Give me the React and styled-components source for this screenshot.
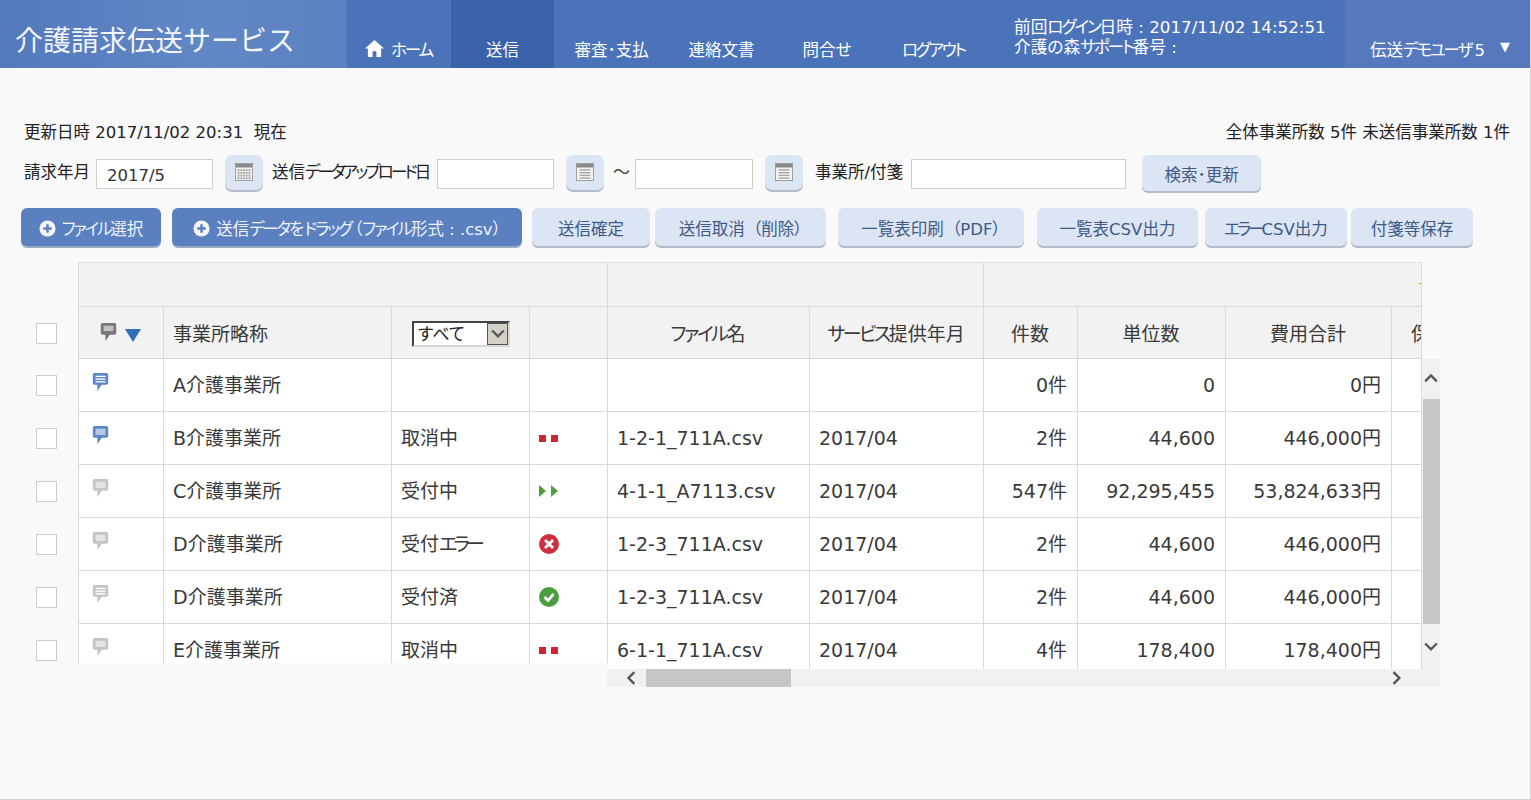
import React from "react";
import styled, { createGlobalStyle } from "styled-components";

const FONT = `"DejaVu Sans", "Noto Sans CJK JP", sans-serif`;

const GlobalStyle = createGlobalStyle`
  html, body {
    margin: 0;
    padding: 0;
    height: 800px;
    overflow: hidden;
    background: #f9f9f9;
  }
  body {
    font-family: ${FONT};
    font-feature-settings: "palt";
    color: #333;
  }
`;

// kana runs are set narrower than the kanji around them
const Kana = styled.span`
  letter-spacing: ${(p) => p.$ls || -0.13}em;
`;

const Page = styled.div`
  height: 799px;
  border-bottom: 1px solid #d4d4d4;
  border-right: 1px solid #d4d4d4;
  box-sizing: content-box;
  width: 1530px;
`;

const Header = styled.header`
  display: flex;
  height: 68px;
  color: #fff;
  background: #4b73b9;
`;

const Title = styled.div`
  width: 347px;
  box-sizing: border-box;
  padding: 23px 0 0 15px;
  font-size: 28px;
  line-height: 38px;
  font-feature-settings: normal;
  background: linear-gradient(90deg, #5379bd 0%, #6287c5 60%, #5c81c1 100%);
  color: #f2f5fb;
`;

const NavItem = styled.a`
  display: flex;
  align-items: flex-end;
  justify-content: center;
  gap: 7px;
  width: ${(p) => p.$w}px;
  box-sizing: border-box;
  padding-bottom: 5px;
  font-size: 16.5px;
  line-height: 24px;
  border-right: 1px solid #4f77bc;
  background: ${(p) => (p.$active ? "#3a62ab" : "#4b73b9")};
`;

const HomeIcon = styled.svg`
  width: 19px;
  height: 19px;
  margin-bottom: 5px;
  fill: #fff;
`;

const LoginInfo = styled.div`
  width: 357px;
  box-sizing: border-box;
  padding: 17px 0 0 26px;
  font-size: 16.7px;
  line-height: 20px;
`;

const UserMenu = styled.div`
  flex: 1;
  display: flex;
  align-items: flex-end;
  justify-content: flex-end;
  gap: 15px;
  padding: 0 20px 5px 0;
  font-size: 16.5px;
  line-height: 24px;
  background: #5679bd;
`;

const UserArrow = styled.span`
  font-size: 13px;
  margin-bottom: 4px;
`;

const Main = styled.main`
  padding: 53px 20px 0 24px;
`;

const StatusLine = styled.div`
  display: flex;
  justify-content: space-between;
  font-size: 16.5px;
  line-height: 24px;
  color: #222;
`;

const FilterRow = styled.div`
  display: flex;
  align-items: flex-start;
  margin-top: 10px;
  height: 38px;
`;

const Label = styled.label`
  font-size: 16.5px;
  line-height: 36px;
  width: ${(p) => p.$w}px;
  white-space: nowrap;
  color: #222;
`;

const TextBox = styled.input`
  box-sizing: border-box;
  width: ${(p) => p.$w}px;
  height: 30px;
  margin-top: 4px;
  padding: 2px 10px 0;
  border: 1px solid #cfcfcf;
  background: #fff;
  font: 16.5px ${FONT};
  color: #333;
  outline: none;
`;

const CalendarButton = styled.button`
  display: flex;
  align-items: center;
  justify-content: center;
  width: 38px;
  height: 35px;
  margin: 0 ${(p) => p.$mr}px 0 12px;
  padding: 0 0 1px;
  border: 0;
  border-radius: 7px;
  background: #dce5f3;
  box-shadow: 0 2px 0 #b4bac6;
`;

const Tilde = styled.span`
  width: 31px;
  margin-left: -9px;
  padding-left: 9px;
  box-sizing: border-box;
  font-size: 17px;
  line-height: 34px;
  color: #444;
`;

const ActionRow = styled.div`
  display: flex;
  margin: 15px 0 0 -3px;
  height: 40px;
`;

const ActionButton = styled.button`
  display: flex;
  align-items: center;
  justify-content: center;
  gap: 6px;
  box-sizing: border-box;
  width: ${(p) => p.$w}px;
  height: ${(p) => p.$h || 38}px;
  margin-left: ${(p) => p.$ml || 0}px;
  padding: 2px 0 0;
  border: 0;
  border-radius: 6px;
  font: 16.5px/24px ${FONT};
  font-feature-settings: "palt";
  white-space: nowrap;
  color: ${(p) => (p.$primary ? "#eef2fa" : "#3f5a86")};
  background: ${(p) => (p.$primary ? "#5a80c0" : "#dce5f3")};
  box-shadow: 0 2px 0 ${(p) => (p.$primary ? "#9aa9c6" : "#b4bac6")};
`;

const ButtonText = styled.span`
  display: block;
  padding-top: 4px;
`;

const Board = styled.section`
  display: flex;
  margin: 14px 0 0 -24px;
`;

const FixedPane = styled.div`
  flex: none;
  width: 608px;
  height: 401px;
  overflow: hidden;
`;

const ScrollPane = styled.div`
  flex: none;
  width: 832px;
`;

const ScrollUpper = styled.div`
  display: flex;
`;

const ScrollBody = styled.div`
  flex: none;
  width: 814px;
  height: 407px;
  overflow: hidden;
`;

const Row = styled.div`
  display: grid;
  grid-template-columns: ${(p) => p.$cols};
  height: ${(p) => p.$h}px;
`;

const Cell = styled.div`
  box-sizing: border-box;
  display: flex;
  align-items: center;
  justify-content: ${(p) => p.$align || "flex-start"};
  padding: ${(p) => (p.$head ? 2 : 0)}px 10px 0 9px;
  font-size: 19px;
  line-height: 26px;
  white-space: nowrap;
  overflow: hidden;
  color: #3a3a3a;
  border-right: 1px solid #d9d9d9;
  border-bottom: 1px solid #d9d9d9;
  background: ${(p) => (p.$head ? "#f2f2f2" : "#fff")};
`;

const GroupCell = styled(Cell)`
  grid-column: ${(p) => p.$span};
  border-top: 1px solid #e2e2e2;
  border-left: ${(p) => (p.$first ? "1px solid #d9d9d9" : "0")};
`;

const CheckCell = styled.div`
  display: flex;
  align-items: center;
  padding-left: 36px;
`;

const Check = styled.span`
  box-sizing: border-box;
  display: block;
  width: 21px;
  height: 21px;
  background: #fff;
  border: 1px solid #cdcdcd;
`;

const IconCell = styled(Cell)`
  align-items: flex-start;
  padding: ${(p) => (p.$head ? "16px 0 0 21px" : "14px 0 0 13px")};
  gap: 8px;
  border-left: 1px solid #d9d9d9;
`;

const FilterSelect = styled.div`
  display: flex;
  align-items: center;
  justify-content: space-between;
  box-sizing: border-box;
  width: 98px;
  height: 26px;
  margin-left: 11px;
  padding-left: 4px;
  font-size: 17px;
  color: #222;
  background: #fff;
  border-top: 2px solid #444;
  border-left: 2px solid #444;
  border-right: 2px solid #d8d8d8;
  border-bottom: 2px solid #d8d8d8;
`;

const SelectArrow = styled.span`
  display: flex;
  align-items: center;
  justify-content: center;
  box-sizing: border-box;
  width: 21px;
  height: 22px;
  background: #d4d0c8;
  border: 1px solid #555;
`;

const HeadText = styled.span`
  width: 100%;
  text-align: center;
`;

const ClippedHead = styled.span`
  padding-left: 10px;
`;

const Marker = styled.span`
  margin-left: auto;
  margin-right: -19px;
  margin-bottom: 4px;
  font-size: 13px;
  color: #e8863a;
`;

const VScroll = styled.div`
  flex: none;
  display: flex;
  flex-direction: column;
  width: 18px;
  height: 311px;
  margin-top: 97px;
  background: #f1f1f1;
`;

const ScrollArrow = styled.div`
  flex: none;
  display: flex;
  align-items: center;
  justify-content: center;
  box-sizing: border-box;
  height: ${(p) => (p.$wide ? "18px" : `${p.$size}px`)};
  width: ${(p) => (p.$wide ? `${p.$size}px` : "auto")};
  padding-left: ${(p) => p.$pad || 0}px;
`;

const VThumb = styled.div`
  flex: none;
  height: 225px;
  margin-left: 1px;
  background: #c6c6c6;
`;

const HScroll = styled.div`
  display: flex;
  height: 18px;
  margin-left: -1px;
  margin-top: -1px;
  background: #f1f1f1;
`;

const HThumb = styled.div`
  width: 145px;
  background: #c6c6c6;
`;

const HSpacer = styled.div`
  flex: 1;
`;

const Chevron = ({ dir }) => {
  const d = {
    up: "M1 8 L6 3 L11 8",
    down: "M1 3 L6 8 L11 3",
    left: "M8 1 L3 6 L8 11",
    right: "M3 1 L8 6 L3 11",
  }[dir];
  return (
    <svg width="14" height="14" viewBox="0 0 12 12" fill="none" stroke="#555" strokeWidth="2">
      <path d={d} />
    </svg>
  );
};

const Calendar = ({ lines }) => (
  <svg width="18" height="18" viewBox="0 0 20 20">
    <rect x="0.5" y="0.5" width="19" height="19" fill="#f2f2f2" stroke="#9a9a9a" />
    <rect x="1" y="1" width="18" height="4" fill="#8a8a8a" />
    {lines
      ? [7, 10, 13, 16].map((y) => <rect key={y} x="4" y={y} width="12" height="1.4" fill="#a0a0a0" />)
      : [7, 10, 13, 16].map((y) =>
          [3, 6, 9, 12, 15].map((x) => <rect key={`${x}-${y}`} x={x} y={y} width="2" height="2" fill="#a0a0a0" />)
        )}
  </svg>
);

const Bubble = ({ color, lines, dark }) => (
  <svg width="17" height="19" viewBox="0 0 17 21">
    <path d="M2 0 H15 Q17 0 17 2 V11 Q17 13 15 13 H10 L5 20 V13 H2 Q0 13 0 11 V2 Q0 0 2 0 Z" fill={color} />
    {lines ? (
      [3, 6, 9].map((y) => <rect key={y} x="3" y={y} width="11" height="1.5" fill="#fff" />)
    ) : (
      <rect x="3" y="3" width="11" height={dark ? 6 : 7} fill="#fff" opacity="0.55" />
    )}
  </svg>
);

const PlusCircle = () => (
  <svg width="17" height="17" viewBox="0 0 18 18">
    <circle cx="9" cy="9" r="8.5" fill="#f4f6fb" />
    <path d="M9 4.5 V13.5 M4.5 9 H13.5" stroke="#5a80c0" strokeWidth="2.6" />
  </svg>
);

const StatusIcon = ({ kind }) => {
  if (kind === "stop")
    return (
      <svg width="21" height="7" viewBox="0 0 21 7">
        <rect width="7" height="7" fill="#cf2433" />
        <rect x="12" width="7" height="7" fill="#cf2433" />
      </svg>
    );
  if (kind === "play")
    return (
      <svg width="20" height="12" viewBox="0 0 20 12">
        <path d="M0 0 L7 6 L0 12 Z M12 0 L19 6 L12 12 Z" fill="#4fa03c" />
      </svg>
    );
  if (kind === "error")
    return (
      <svg width="20" height="20" viewBox="0 0 20 20">
        <circle cx="10" cy="10" r="10" fill="#cf2e3a" />
        <path d="M6 6 L14 14 M14 6 L6 14" stroke="#fff" strokeWidth="3" />
      </svg>
    );
  return (
    <svg width="20" height="20" viewBox="0 0 20 20">
      <circle cx="10" cy="10" r="10" fill="#4b9e3f" />
      <path d="M5.5 10 L9 13.5 L14.5 7" stroke="#fff" strokeWidth="2.8" fill="none" />
    </svg>
  );
};

const ROWS = [
  { note: "#5c86c6", lines: true, name: "A介護事業所", count: "0件", units: "0", total: "0円" },
  { note: "#5c86c6", name: "B介護事業所", status: "取消中", kind: "stop", file: "1-2-1_711A.csv", month: "2017/04", count: "2件", units: "44,600", total: "446,000円" },
  { note: "#c4c4c4", name: "C介護事業所", status: "受付中", kind: "play", file: "4-1-1_A7113.csv", month: "2017/04", count: "547件", units: "92,295,455", total: "53,824,633円" },
  { note: "#c4c4c4", name: "D介護事業所", status: <>受付<Kana $ls={-0.2}>エラー</Kana></>, kind: "error", file: "1-2-3_711A.csv", month: "2017/04", count: "2件", units: "44,600", total: "446,000円" },
  { note: "#c4c4c4", lines: true, name: "D介護事業所", status: "受付済", kind: "ok", file: "1-2-3_711A.csv", month: "2017/04", count: "2件", units: "44,600", total: "446,000円" },
  { note: "#c4c4c4", name: "E介護事業所", status: "取消中", kind: "stop", file: "6-1-1_711A.csv", month: "2017/04", count: "4件", units: "178,400", total: "178,400円" },
];

const FIXED_COLS = "78px 86px 228px 138px 78px";
const SCROLL_COLS = "202px 174px 94px 148px 166px 30px";

const NAV = [
  { id: "send", label: "送信", w: 104, active: true },
  { id: "review", label: "審査･支払", w: 114 },
  { id: "docs", label: "連絡文書", w: 106 },
  { id: "contact", label: "問合せ", w: 105 },
  { id: "logout", label: <Kana>ログアウト</Kana>, w: 108 },
];

const ACTIONS = [
  { id: "confirm", label: "送信確定", w: 118, ml: 10 },
  { id: "cancel", label: "送信取消\u2002（削除）", w: 171, ml: 5 },
  { id: "pdf", label: "一覧表印刷\u2002（PDF）", w: 186, ml: 12 },
  { id: "csv", label: "一覧表CSV出力", w: 161, ml: 13 },
  { id: "errcsv", label: <><Kana $ls={-0.18}>エラー</Kana>CSV出力</>, w: 142, ml: 7 },
  { id: "save", label: "付箋等保存", w: 122, ml: 4 },
];

export default function App() {
  return (
    <Page>
      <GlobalStyle />
      <Header>
        <Title>介護請求伝送サービス</Title>
        <NavItem $w={104}>
          <HomeIcon viewBox="0 0 20 20">
            <path d="M10 1 L20 10 H17 V19 H12 V13 H8 V19 H3 V10 H0 Z" />
          </HomeIcon>
          <Kana>ホーム</Kana>
        </NavItem>
        {NAV.map((item) => (
          <NavItem key={item.id} $w={item.w} $active={item.active}>
            {item.label}
          </NavItem>
        ))}
        <LoginInfo>
          前回<Kana>ログイン</Kana>日時 : 2017/11/02 14:52:51
          <br />
          介護の森<Kana>サポート</Kana>番号 :
        </LoginInfo>
        <UserMenu>
          <span>伝送<Kana>デモユーザ</Kana>{"\u2009"}5</span>
          <UserArrow>▼</UserArrow>
        </UserMenu>
      </Header>

      <Main>
        <StatusLine>
          <span>更新日時 2017/11/02 20:31&nbsp; 現在</span>
          <span>全体事業所数 5件 未送信事業所数 1件</span>
        </StatusLine>

        <FilterRow>
          <Label $w={72}>請求年月</Label>
          <TextBox $w={117} defaultValue="2017/5" />
          <CalendarButton $mr={9}>
            <Calendar />
          </CalendarButton>
          <Label $w={165}>送信<Kana $ls={-0.17}>データアップロード</Kana>日</Label>
          <TextBox $w={117} />
          <CalendarButton $mr={9}>
            <Calendar lines />
          </CalendarButton>
          <Tilde>～</Tilde>
          <TextBox $w={118} />
          <CalendarButton $mr={12}>
            <Calendar lines />
          </CalendarButton>
          <Label $w={96}>事業所/付箋</Label>
          <TextBox $w={215} />
          <ActionButton $w={119} $h={36} $ml={16}>
            <ButtonText>検索･更新</ButtonText>
          </ActionButton>
        </FilterRow>

        <ActionRow>
          <ActionButton $primary $w={140}>
            <PlusCircle />
            <ButtonText><Kana>ファイル</Kana>選択</ButtonText>
          </ActionButton>
          <ActionButton $primary $w={350} $ml={11}>
            <PlusCircle />
            <ButtonText>送信<Kana>データ</Kana>を<Kana>ドラッグ</Kana>{"\u2009"}（<Kana>ファイル</Kana>形式 : .csv）</ButtonText>
          </ActionButton>
          {ACTIONS.map((a) => (
            <ActionButton key={a.id} $w={a.w} $ml={a.ml}>
              <ButtonText>{a.label}</ButtonText>
            </ActionButton>
          ))}
        </ActionRow>

        <Board>
          <FixedPane>
            <Row $cols={FIXED_COLS} $h={45}>
              <CheckCell />
              <GroupCell $head $first $span="2 / 6" />
            </Row>
            <Row $cols={FIXED_COLS} $h={52}>
              <CheckCell>
                <Check />
              </CheckCell>
              <IconCell $head>
                <Bubble color="#777" dark />
                <svg width="16" height="22" viewBox="0 0 16 22">
                  <path d="M0 6 H16 L8 19 Z" fill="#2f6fb5" />
                </svg>
              </IconCell>
              <Cell $head>事業所略称</Cell>
              <Cell $head>
                <FilterSelect>
                  すべて
                  <SelectArrow>
                    <Chevron dir="down" />
                  </SelectArrow>
                </FilterSelect>
              </Cell>
              <Cell $head />
            </Row>
            {ROWS.map((r) => (
              <Row key={r.file || r.name} $cols={FIXED_COLS} $h={53}>
                <CheckCell>
                  <Check />
                </CheckCell>
                <IconCell>
                  <Bubble color={r.note} lines={r.lines} />
                </IconCell>
                <Cell>{r.name}</Cell>
                <Cell>{r.status}</Cell>
                <Cell>{r.kind && <StatusIcon kind={r.kind} />}</Cell>
              </Row>
            ))}
          </FixedPane>

          <ScrollPane>
            <ScrollUpper>
              <ScrollBody>
                <Row $cols={SCROLL_COLS} $h={45}>
                  <GroupCell $head $span="1 / 3" />
                  <GroupCell $head $span="3 / 7">
                    <Marker>＋</Marker>
                  </GroupCell>
                </Row>
                <Row $cols={SCROLL_COLS} $h={52}>
                  <Cell $head><HeadText><Kana>ファイル</Kana>名</HeadText></Cell>
                  <Cell $head><HeadText><Kana>サービス</Kana>提供年月</HeadText></Cell>
                  <Cell $head><HeadText>件数</HeadText></Cell>
                  <Cell $head><HeadText>単位数</HeadText></Cell>
                  <Cell $head><HeadText>費用合計</HeadText></Cell>
                  <Cell $head><ClippedHead>保留</ClippedHead></Cell>
                </Row>
                {ROWS.map((r) => (
                  <Row key={r.file || r.name} $cols={SCROLL_COLS} $h={53}>
                    <Cell>{r.file}</Cell>
                    <Cell>{r.month}</Cell>
                    <Cell $align="flex-end">{r.count}</Cell>
                    <Cell $align="flex-end">{r.units}</Cell>
                    <Cell $align="flex-end">{r.total}</Cell>
                    <Cell />
                  </Row>
                ))}
              </ScrollBody>
              <VScroll>
                <ScrollArrow $size={40}><Chevron dir="up" /></ScrollArrow>
                <VThumb />
                <ScrollArrow $size={46}><Chevron dir="down" /></ScrollArrow>
              </VScroll>
            </ScrollUpper>
            <HScroll>
              <ScrollArrow $size={39} $wide $pad={10}><Chevron dir="left" /></ScrollArrow>
              <HThumb />
              <HSpacer />
              <ScrollArrow $size={18} $wide><Chevron dir="right" /></ScrollArrow>
              <ScrollArrow $size={34} $wide />
            </HScroll>
          </ScrollPane>
        </Board>
      </Main>
    </Page>
  );
}
